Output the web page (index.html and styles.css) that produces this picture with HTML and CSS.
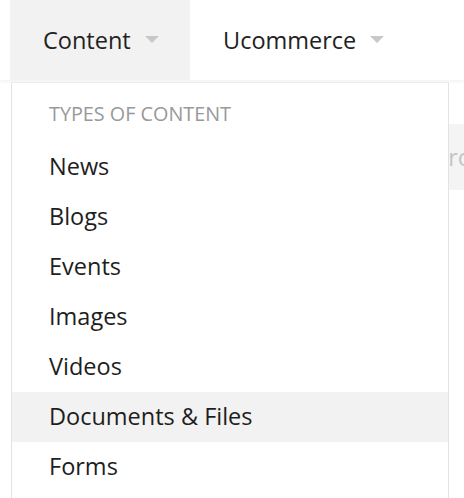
FILE: index.html
```html
<!DOCTYPE html>
<html>
<head>
<meta charset="utf-8">
<link rel="stylesheet" href="styles.css">
</head>
<body>
<div class="page">
  <nav class="topbar">
    <div class="tab tab-active">Content <span class="caret"></span></div>
    <div class="tab">Ucommerce <span class="caret"></span></div>
  </nav>
  <div class="under">
    <div class="field">ro</div>
  </div>
  <div class="dropdown">
    <div class="heading">Types of content</div>
    <ul class="menu">
      <li class="item">News</li>
      <li class="item">Blogs</li>
      <li class="item">Events</li>
      <li class="item">Images</li>
      <li class="item">Videos</li>
      <li class="item item-hover">Documents &amp; Files</li>
      <li class="item">Forms</li>
    </ul>
  </div>
</div>
</body>
</html>
```
FILE: styles.css
```css
html, body {
  margin: 0;
  padding: 0;
  background: #fff;
}
body {
  font-family: "Open Sans", "Liberation Sans", sans-serif;
  color: #222;
  width: 464px;
  height: 498px;
  overflow: hidden;
}
.page {
  position: relative;
  width: 464px;
  height: 498px;
}
.topbar {
  display: flex;
  height: 80px;
  padding-left: 10px;
  background: #fff;
  box-shadow: 0 2px 3px rgba(0,0,0,0.05);
  position: relative;
  z-index: 1;
}
.tab {
  display: flex;
  align-items: center;
  padding: 0 0 0 33px;
  font-size: 23.5px;
  color: #222;
  height: 80px;
  width: 180px;
  box-sizing: border-box;
}
.tab-active {
  background: #f2f2f2;
}
.caret {
  display: inline-block;
  width: 0;
  height: 0;
  border-left: 7px solid transparent;
  border-right: 7px solid transparent;
  border-top: 7px solid #c8c8c8;
  margin-left: 14px;
  margin-top: -2px;
}
.under {
  padding-top: 44px;
  display: flex;
  justify-content: flex-end;
}
.field {
  width: 260px;
  height: 66px;
  background: #f4f4f4;
  color: #c4c4c4;
  font-size: 23.5px;
  display: flex;
  align-items: center;
  justify-content: flex-end;
  box-sizing: border-box;
  margin-right: -8px;
}
.dropdown {
  position: absolute;
  left: 11px;
  top: 82px;
  width: 438px;
  box-sizing: border-box;
  background: #fff;
  border: 1px solid #e3e3e3;
  border-top-color: #ececec;
  z-index: 2;
  height: 430px;
}
.heading {
  text-transform: uppercase;
  color: #999;
  font-size: 19.8px;
  padding: 2px 0 0 37px;
  height: 59px;
  display: flex;
  align-items: center;
  box-sizing: border-box;
}
.menu {
  list-style: none;
  margin: 0;
  padding: 0;
}
.item {
  height: 50px;
  display: flex;
  align-items: center;
  padding-left: 37px;
  padding-bottom: 2px;
  box-sizing: border-box;
  font-size: 23.5px;
  color: #1e1e1e;
}
.item-hover {
  background: #f2f2f2;
}
```
